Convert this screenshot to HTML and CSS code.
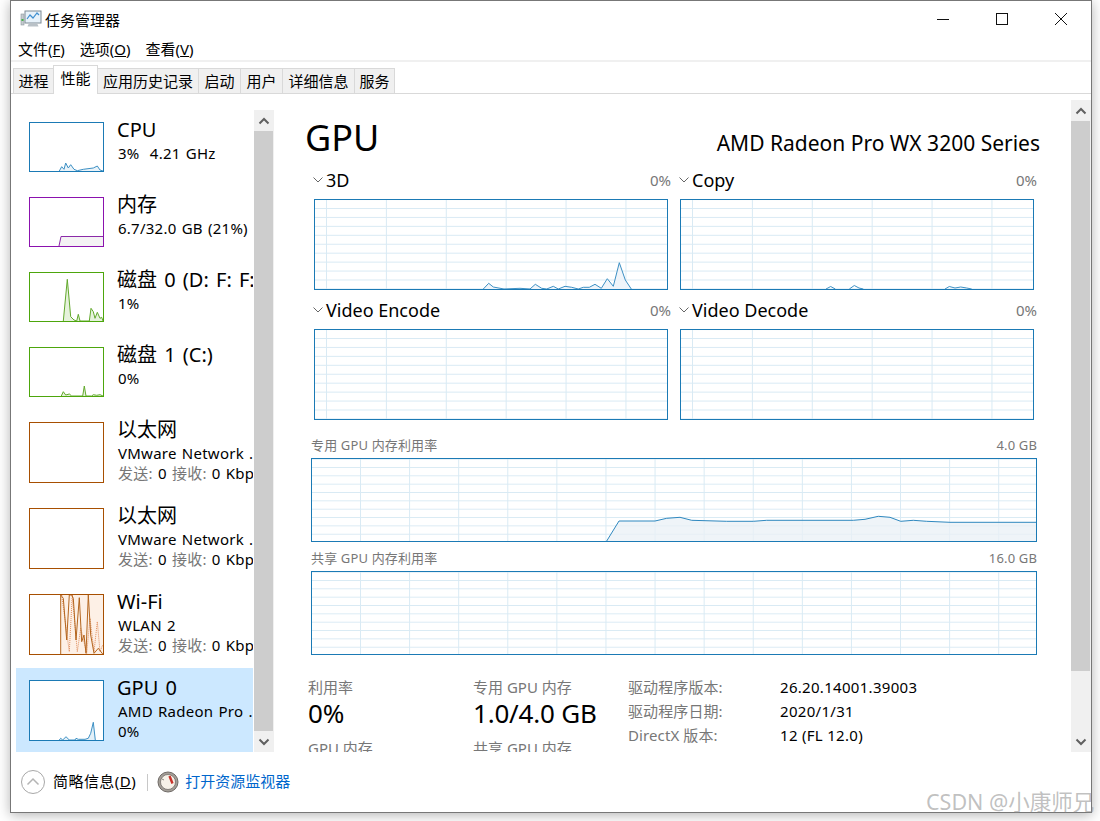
FILE: index.html
```html
<!DOCTYPE html>
<html lang="zh">
<head>
    <title>任务管理器</title>
    <meta charset="UTF-8">
    <link rel="stylesheet" href="styles.css">
</head>
<body>
<div class="window">
    <div class="titlebar">
        <svg class="app-icon" width="22" height="18" viewBox="0 0 22 18">
            <rect x="5" y="1" width="16" height="12" fill="#e8f2fa" stroke="#7d8a94"/>
            <polyline points="7,9 10,5 13,8 17,3 19,5" fill="none" stroke="#3f8fcf" stroke-width="1.2"/>
            <rect x="1" y="4" width="3" height="11" fill="#c5cbcf" stroke="#8d979e" stroke-width=".6"/>
            <rect x="1.5" y="9" width="2" height="2" fill="#46b34a"/>
            <path d="M9 13h8l1.5 3.5h-11z" fill="#b9c1c7"/>
        </svg>
        <span class="app-title">任务管理器</span>
        <div class="win-buttons">
            <svg width="14" height="14" viewBox="0 0 14 14"><path d="M1 7.5h12" stroke="#111" fill="none"/></svg>
            <svg width="14" height="14" viewBox="0 0 14 14"><rect x="1.5" y="1.5" width="11" height="11" stroke="#111" fill="none"/></svg>
            <svg width="14" height="14" viewBox="0 0 14 14"><path d="M1 1l12 12M13 1L1 13" stroke="#111" fill="none"/></svg>
        </div>
    </div>

    <div class="menubar">
        <span>文件(<u>F</u>)</span>
        <span>选项(<u>O</u>)</span>
        <span>查看(<u>V</u>)</span>
    </div>

    <div class="tabs">
        <div class="tab tab-w40">进程</div>
        <div class="tab tab-w46 active">性能</div>
        <div class="tab tab-w100">应用历史记录</div>
        <div class="tab tab-w42">启动</div>
        <div class="tab tab-w42">用户</div>
        <div class="tab tab-w72">详细信息</div>
        <div class="tab tab-w40">服务</div>
    </div>

    <div class="body">
        <div class="sidebar">
            <div class="list">
                <div class="item">
                    <svg class="thumb thumb-s cpu" viewBox="0 0 73 48">
                        <polygon fill="#eaf3f9" points="29.3,48 31.7,43.7 34,46.3 35.7,40 38.3,45 40.7,41.7 44,46.3 47.3,47.7 53.3,46.3 63.3,45 67.3,43 70,47 73,48"/>
                        <polyline fill="none" stroke="#3d90c4" points="29.3,48 31.7,43.7 34,46.3 35.7,40 38.3,45 40.7,41.7 44,46.3 47.3,47.7 53.3,46.3 63.3,45 67.3,43 70,47 73,48"/>
                    </svg>
                    <div class="info">
                        <div class="name">CPU</div>
                        <div class="sub">3%&nbsp; 4.21 GHz</div>
                    </div>
                </div>
                <div class="item">
                    <svg class="thumb thumb-s mem" viewBox="0 0 73 48">
                        <polygon fill="#f4f2f4" points="29,48 31,38.5 73,38.5 73,48"/>
                        <polyline fill="none" stroke="#8b2aa8" points="29,48 31,38.5 73,38.5"/>
                    </svg>
                    <div class="info">
                        <div class="name">内存</div>
                        <div class="sub">6.7/32.0 GB (21%)</div>
                    </div>
                </div>
                <div class="item">
                    <svg class="thumb thumb-s disk" viewBox="0 0 73 48">
                        <polygon fill="#e6f2dc" points="33.3,48 37.3,6.3 40.7,43.7 44,47 46.7,48 48.3,41.3 50,48 59.3,48 61,35.3 63.3,38.7 65,45.3 67.3,39.3 70,45.3 71.7,44.3 73,48"/>
                        <polyline fill="none" stroke="#62a92c" points="33.3,48 37.3,6.3 40.7,43.7 44,47 46.7,48 48.3,41.3 50,48 59.3,48 61,35.3 63.3,38.7 65,45.3 67.3,39.3 70,45.3 71.7,44.3 73,48"/>
                    </svg>
                    <div class="info">
                        <div class="name">磁盘 0 (D: F: F:)</div>
                        <div class="sub">1%</div>
                    </div>
                </div>
                <div class="item">
                    <svg class="thumb thumb-s disk" viewBox="0 0 73 48">
                        <polygon fill="#e6f2dc" points="31.3,48 33.3,43.7 35.7,47 39.3,46 41.7,48 52.7,48 54.3,38 56,48 61.7,48 63.3,46.7 66.7,47.3 70,46.7 73,48"/>
                        <polyline fill="none" stroke="#62a92c" points="31.3,48 33.3,43.7 35.7,47 39.3,46 41.7,48 52.7,48 54.3,38 56,48 61.7,48 63.3,46.7 66.7,47.3 70,46.7 73,48"/>
                    </svg>
                    <div class="info">
                        <div class="name">磁盘 1 (C:)</div>
                        <div class="sub">0%</div>
                    </div>
                </div>
                <div class="item item-tall">
                    <svg class="thumb thumb-l net" viewBox="0 0 73 59"></svg>
                    <div class="info">
                        <div class="name">以太网</div>
                        <div class="sub">VMware Network ...</div>
                        <div class="sub"><span class="dim">发送:</span> 0 <span class="dim">接收:</span> 0 Kbps</div>
                    </div>
                </div>
                <div class="item item-tall">
                    <svg class="thumb thumb-l net" viewBox="0 0 73 59"></svg>
                    <div class="info">
                        <div class="name">以太网</div>
                        <div class="sub">VMware Network ...</div>
                        <div class="sub"><span class="dim">发送:</span> 0 <span class="dim">接收:</span> 0 Kbps</div>
                    </div>
                </div>
                <div class="item item-tall">
                    <svg class="thumb thumb-l net" viewBox="0 0 73 59">
                        <polygon fill="#fdf0e6" points="30.7,59 30.7,0 73,0 73,59"/>
                        <polyline fill="none" stroke="#e08d5c" stroke-dasharray="1 1" points="31.7,0 39.3,56.7 42.3,0 47.3,56.7 50.7,33.3 56.7,58.3 60,23.3 64,56.7 67.3,26.7 70,56.7 72.7,50"/>
                        <polyline fill="none" stroke="#b4661f" points="30.7,59 30.7,0 33.3,3.3 36.7,45 39.3,0 41.7,0 43.3,3.3 46,45 49.3,2.7 51.7,46.7 54,40 56,58.3 58.3,0 60.7,40 64,58.3 68.3,53.3 72.7,59"/>
                    </svg>
                    <div class="info">
                        <div class="name">Wi-Fi</div>
                        <div class="sub">WLAN 2</div>
                        <div class="sub"><span class="dim">发送:</span> 0 <span class="dim">接收:</span> 0 Kbps</div>
                    </div>
                </div>
                <div class="item item-tall selected">
                    <svg class="thumb thumb-l cpu" viewBox="0 0 73 59">
                        <polygon fill="#e3f0f8" points="29.3,59 30.7,57.3 32.7,59 36,55.7 39.3,59 45,59 46,57.3 48.3,58.3 55,58.3 58.3,57.3 60.7,52.3 63.3,41.3 65.3,59"/>
                        <polyline fill="none" stroke="#3d90c4" points="29.3,59 30.7,57.3 32.7,59 36,55.7 39.3,59 45,59 46,57.3 48.3,58.3 55,58.3 58.3,57.3 60.7,52.3 63.3,41.3 65.3,59"/>
                    </svg>
                    <div class="info">
                        <div class="name">GPU 0</div>
                        <div class="sub">AMD Radeon Pro ...</div>
                        <div class="sub">0%</div>
                    </div>
                </div>
            </div>
            <div class="scrollbar">
                <div class="sb-btn"><svg width="12" height="8" viewBox="0 0 12 8"><path d="M1.5 6.5L6 2l4.5 4.5" fill="none" stroke="#606060" stroke-width="2"/></svg></div>
                <div class="sb-thumb sb-full"></div>
                <div class="sb-btn"><svg width="12" height="8" viewBox="0 0 12 8"><path d="M1.5 1.5L6 6l4.5-4.5" fill="none" stroke="#606060" stroke-width="2"/></svg></div>
            </div>
        </div>

        <div class="main">
            <div class="content">
                <div class="heading">
                    <span class="gpu-title">GPU</span>
                    <span class="gpu-model">AMD Radeon Pro WX 3200 Series</span>
                </div>

                <div class="engines">
                    <div class="engine">
                        <div class="engine-head">
                            <svg class="chev" width="10" height="6" viewBox="0 0 10 6"><path d="M.5.5L5 5 9.5.5" fill="none" stroke="#666"/></svg>
                            <span class="engine-name">3D</span>
                            <span class="pct">0%</span>
                        </div>
                        <svg class="chart small" viewBox="0 0 352 89">
                            <polygon fill="#eef4f9" fill-opacity=".9" points="168.3,89 173.7,83.3 178.3,87 189,89 205,88.3 215,89 220.3,84.3 226.7,88.3 231.7,89 238.3,86.3 243.3,89 250,86.3 256.7,87.3 263.3,89 268.3,87.3 274.3,87.3 280,84.3 286.3,88.3 292.3,78.7 298.3,86.3 304.3,62.7 310.3,80 316.3,89"/>
                            <polyline fill="none" stroke="#3d90c4" points="168.3,89 173.7,83.3 178.3,87 189,89 205,88.3 215,89 220.3,84.3 226.7,88.3 231.7,89 238.3,86.3 243.3,89 250,86.3 256.7,87.3 263.3,89 268.3,87.3 274.3,87.3 280,84.3 286.3,88.3 292.3,78.7 298.3,86.3 304.3,62.7 310.3,80 316.3,89"/>
                        </svg>
                    </div>
                    <div class="engine">
                        <div class="engine-head">
                            <svg class="chev" width="10" height="6" viewBox="0 0 10 6"><path d="M.5.5L5 5 9.5.5" fill="none" stroke="#666"/></svg>
                            <span class="engine-name">Copy</span>
                            <span class="pct">0%</span>
                        </div>
                        <svg class="chart small" viewBox="0 0 352 89">
                            <polyline fill="none" stroke="#3d90c4" points="145,89 149.7,86.5 154.3,89"/>
                            <polyline fill="none" stroke="#3d90c4" points="168.3,89 173.3,85.5 178,88 182.3,89"/>
                            <polyline fill="none" stroke="#3d90c4" points="264,89 268.3,86.5 274,88 279.7,87 285.7,88 290.7,89"/>
                        </svg>
                    </div>
                    <div class="engine">
                        <div class="engine-head">
                            <svg class="chev" width="10" height="6" viewBox="0 0 10 6"><path d="M.5.5L5 5 9.5.5" fill="none" stroke="#666"/></svg>
                            <span class="engine-name">Video Encode</span>
                            <span class="pct">0%</span>
                        </div>
                        <svg class="chart small" viewBox="0 0 352 89"></svg>
                    </div>
                    <div class="engine">
                        <div class="engine-head">
                            <svg class="chev" width="10" height="6" viewBox="0 0 10 6"><path d="M.5.5L5 5 9.5.5" fill="none" stroke="#666"/></svg>
                            <span class="engine-name">Video Decode</span>
                            <span class="pct">0%</span>
                        </div>
                        <svg class="chart small" viewBox="0 0 352 89"></svg>
                    </div>
                </div>

                <div class="memory">
                    <div class="mem-head"><span>专用 GPU 内存利用率</span><span>4.0 GB</span></div>
                    <svg class="chart wide" viewBox="0 0 724 82">
                        <polygon fill="#e9f0f6" fill-opacity=".75" points="294.7,82 307,62 343,62 354.7,59.3 368,58.3 379.7,61.3 414.7,62.3 441.3,62.3 454.7,61.3 541.3,61.3 553,60.3 566.3,57.3 578,58.3 588.7,62.3 601.3,61.3 614.7,62.3 638,63.3 724,63.3 724,82"/>
                        <polyline fill="none" stroke="#2f88bf" points="294.7,82 307,62 343,62 354.7,59.3 368,58.3 379.7,61.3 414.7,62.3 441.3,62.3 454.7,61.3 541.3,61.3 553,60.3 566.3,57.3 578,58.3 588.7,62.3 601.3,61.3 614.7,62.3 638,63.3 724,63.3"/>
                    </svg>
                    <div class="mem-head"><span>共享 GPU 内存利用率</span><span>16.0 GB</span></div>
                    <svg class="chart wide" viewBox="0 0 724 82"></svg>
                </div>

                <div class="stats">
                    <div class="stat-col col-a">
                        <div class="stat-label">利用率</div>
                        <div class="stat-value">0%</div>
                        <div class="stat-label stat-next">GPU 内存</div>
                    </div>
                    <div class="stat-col col-b">
                        <div class="stat-label">专用 GPU 内存</div>
                        <div class="stat-value">1.0/4.0 GB</div>
                        <div class="stat-label stat-next">共享 GPU 内存</div>
                    </div>
                    <div class="props">
                        <div class="prop"><span class="prop-k">驱动程序版本:</span><span>26.20.14001.39003</span></div>
                        <div class="prop"><span class="prop-k">驱动程序日期:</span><span>2020/1/31</span></div>
                        <div class="prop"><span class="prop-k">DirectX 版本:</span><span>12 (FL 12.0)</span></div>
                    </div>
                </div>
            </div>
            <div class="scrollbar scrollbar-main">
                <div class="sb-btn"><svg width="12" height="8" viewBox="0 0 12 8"><path d="M1.5 6.5L6 2l4.5 4.5" fill="none" stroke="#606060" stroke-width="2"/></svg></div>
                <div class="sb-thumb sb-main-thumb"></div>
                <div class="sb-track"></div>
                <div class="sb-btn"><svg width="12" height="8" viewBox="0 0 12 8"><path d="M1.5 1.5L6 6l4.5-4.5" fill="none" stroke="#606060" stroke-width="2"/></svg></div>
            </div>
        </div>
    </div>

    <div class="footer">
        <svg width="26" height="26" viewBox="0 0 26 26">
            <circle cx="13" cy="13" r="11.5" fill="#fff" stroke="#a8a8a8"/>
            <path d="M7.5 15.5L13 10l5.5 5.5" fill="none" stroke="#b4b4b4" stroke-width="1.5"/>
        </svg>
        <span class="less">简略信息(<u>D</u>)</span>
        <span class="divider"></span>
        <svg width="22" height="22" viewBox="0 0 22 22">
            <circle cx="11" cy="11" r="10" fill="#a39e97" stroke="#6f6a66"/>
            <circle cx="11" cy="11" r="7.5" fill="#f6f1e8" stroke="#57534f" stroke-width=".6"/>
            <path d="M12.5 5l3 7.5" stroke="#c8322a" stroke-width="2.4" fill="none"/>
            <path d="M5 8l2 1" stroke="#8a8580"/>
        </svg>
        <span class="monitor">打开资源监视器</span>
    </div>
</div>
<div class="watermark">CSDN @小康师兄</div>
</body>
</html>
```

FILE: styles.css
```css
* {
    box-sizing: border-box;
}
html, body {
    margin: 0;
    height: 821px;
    overflow: hidden;
    background: white;
}
body {
    font-family: "Noto Sans", "Noto Sans CJK SC", sans-serif;
    font-size: 15px;
    color: #000;
    position: relative;
}
svg {
    display: block;
    flex: none;
}
.window {
    width: 1082px;
    height: 813px;
    margin-left: 10px;
    background: white;
    border: 1px solid #777;
    box-shadow: 0 2px 12px rgba(0,0,0,0.3);
    display: flex;
    flex-direction: column;
}

/* title + menu */
.titlebar {
    height: 36px;
    display: flex;
    align-items: center;
    padding-left: 9px;
    flex: none;
}
.app-icon {
    margin-right: 3px;
}
.win-buttons {
    margin-left: auto;
    display: flex;
    gap: 45px;
    padding-right: 23px;
    align-items: center;
}
.menubar {
    height: 25px;
    display: flex;
    gap: 15px;
    padding-left: 7px;
    align-items: center;
    border-bottom: 2px solid #f0f0f0;
    flex: none;
}

/* tabs */
.tabs {
    height: 32px;
    display: flex;
    align-items: flex-end;
    padding-left: 2px;
    border-bottom: 1px solid #d9d9d9;
    flex: none;
}
.tab {
    height: 25px;
    background: #f0f0f0;
    border: 1px solid #d9d9d9;
    border-bottom: none;
    margin-right: -1px;
    text-align: center;
    line-height: 24px;
    white-space: nowrap;
}
.tab.active {
    height: 29px;
    background: white;
    line-height: 25px;
    margin-bottom: -1px;
    position: relative;
    padding-bottom: 3px;
}
.tab-w40 { width: 41px; }
.tab-w46 { width: 45px; }
.tab-w100 { width: 102px; }
.tab-w42 { width: 43px; }
.tab-w72 { width: 73px; }

/* left list */
.body {
    height: 658px;
    flex: none;
    display: flex;
}
.sidebar {
    width: 263px;
    height: 658px;
    padding: 16px 0 0 5px;
    display: flex;
    flex: none;
}
.list {
    width: 238px;
    overflow: hidden;
}
.item {
    height: 75px;
    padding: 12px 0 0 13px;
    margin-right: 1px;
    display: flex;
    overflow: hidden;
}
.item-tall {
    height: 86px;
}
.selected {
    background: #cce8ff;
    height: 84px;
}
.thumb {
    width: 75px;
    background: white;
    border: 1px solid;
    margin-right: 13px;
}
.thumb-s { height: 50px; }
.thumb-l { height: 61px; }
.cpu { border-color: #1b7ab5; }
.mem { border-color: #8b12ae; }
.disk { border-color: #4da60c; }
.net { border-color: #a74f01; }
.info {
    min-width: 0;
    flex: 1;
    white-space: nowrap;
    overflow: hidden;
    margin-top: -4px;
}
.name {
    font-size: 20px;
    line-height: 24px;
    word-spacing: 2px;
}
.sub {
    line-height: 20px;
    letter-spacing: 0.25px;
    word-spacing: 1px;
    margin-top: 1px;
    padding-left: 1px;
}
.sub + .sub {
    margin-top: 0;
}
.dim {
    color: #777;
}

/* scrollbars */
.scrollbar {
    width: 20px;
    display: flex;
    flex-direction: column;
    flex: none;
    background: #f0f0f0;
}
.sb-btn {
    height: 21px;
    display: flex;
    align-items: center;
    justify-content: center;
    background: #f0f0f0;
    flex: none;
}
.sb-thumb {
    background: #cdcdcd;
    margin-right: 1px;
}
.sb-full {
    flex: 1;
}
.sb-main-thumb {
    height: 550px;
    flex: none;
}
.sb-track {
    flex: 1;
}

/* right panel */
.main {
    flex: 1;
    height: 658px;
    display: flex;
    padding-top: 6px;
    min-width: 0;
}
.content {
    flex: 1;
    overflow: hidden;
    min-width: 0;
}
.heading {
    display: flex;
    justify-content: space-between;
    align-items: baseline;
    padding: 19px 31px 0 31px;
    height: 70px;
}
.gpu-title {
    font-size: 36px;
    line-height: 38px;
}
.gpu-model {
    font-size: 21px;
    line-height: 28px;
}
.engines {
    display: grid;
    grid-template-columns: 354px 354px;
    column-gap: 12px;
    padding-left: 40px;
}
.engine {
    margin-bottom: 10px;
}
.engine-head {
    height: 20px;
    margin: 0 -3px 9px -1px;
    display: flex;
    align-items: center;
}
.chev {
    margin-right: 3px;
}
.engine-name {
    font-size: 18px;
}
.pct {
    margin-left: auto;
    color: #777;
    font-size: 15px;
}
.chart {
    width: 100%;
    background-color: white;
    border: 1px solid #1b7ab5;
    background-repeat: repeat;
}
.chart.small {
    height: 91px;
    background-image:
        linear-gradient(to right, #d9eaf4 1px, transparent 1px),
        linear-gradient(to bottom, #d9eaf4 1px, transparent 1px);
    background-size: 59.9px 100%, 100% 8.95px;
    background-position: 11px 0, 0 8px;
}
.memory {
    width: 726px;
    margin: 7px 0 0 37px;
}
.mem-head {
    display: flex;
    justify-content: space-between;
    height: 16px;
    line-height: 16px;
    margin-bottom: 5px;
    font-size: 13px;
    letter-spacing: 0.15px;
    color: #777;
}
.chart.wide {
    height: 84px;
    margin-bottom: 8px;
    background-image:
        linear-gradient(to right, #d9eaf4 1px, transparent 1px),
        linear-gradient(to bottom, #d9eaf4 1px, transparent 1px);
    background-size: 49.1px 100%, 100% 8.35px;
    background-position: 48px 0, 0 8px;
}
.stats {
    display: flex;
    padding: 15px 0 0 34px;
}
.stat-col {
    flex: none;
}
.col-a { width: 165px; }
.col-b { width: 155px; }
.stat-label {
    color: #777;
    line-height: 19px;
    white-space: nowrap;
}
.stat-value {
    font-size: 26px;
    line-height: 32px;
    letter-spacing: -0.2px;
    white-space: nowrap;
}
.stat-next {
    margin-top: 10px;
}
.props {
    margin-top: -1px;
}
.prop {
    display: flex;
    height: 24px;
    line-height: 20px;
    white-space: nowrap;
    letter-spacing: 0.3px;
}
.prop-k {
    width: 152px;
    color: #777;
    letter-spacing: 0.1px;
}

/* footer */
.footer {
    flex: 1;
    display: flex;
    align-items: center;
    padding-left: 9px;
}
.less {
    margin-left: 7px;
    padding-bottom: 3px;
    letter-spacing: 0.45px;
}
.divider {
    width: 1px;
    height: 17px;
    background: #c8c8c8;
    margin: 0 9px 0 11px;
}
.monitor {
    color: #0066cc;
    margin-left: 6px;
    padding-bottom: 3px;
}

.watermark {
    position: absolute;
    left: 926px;
    top: 788px;
    font-size: 21.5px;
    line-height: 28px;
    color: rgba(140,140,140,0.55);
    white-space: nowrap;
}
```
